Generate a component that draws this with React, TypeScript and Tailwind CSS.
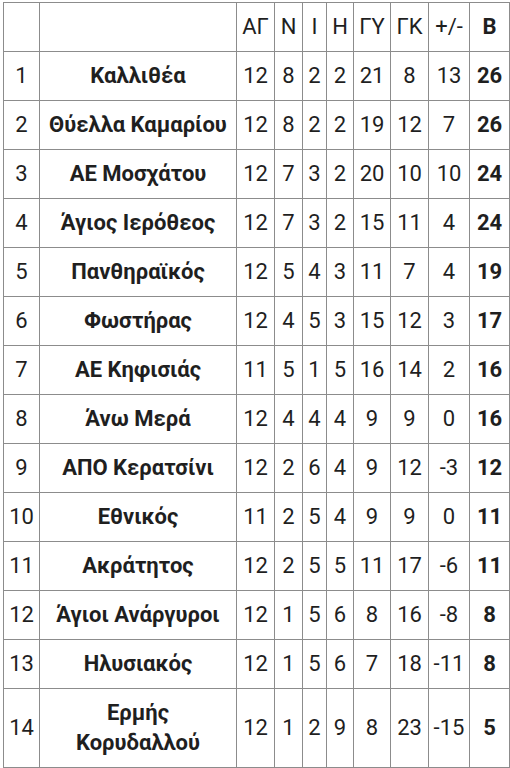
const rows: [number, string, number, number, number, number, number, number, number, number][] = [
  [1, "Καλλιθέα", 12, 8, 2, 2, 21, 8, 13, 26],
  [2, "Θύελλα Καμαρίου", 12, 8, 2, 2, 19, 12, 7, 26],
  [3, "ΑΕ Μοσχάτου", 12, 7, 3, 2, 20, 10, 10, 24],
  [4, "Άγιος Ιερόθεος", 12, 7, 3, 2, 15, 11, 4, 24],
  [5, "Πανθηραϊκός", 12, 5, 4, 3, 11, 7, 4, 19],
  [6, "Φωστήρας", 12, 4, 5, 3, 15, 12, 3, 17],
  [7, "ΑΕ Κηφισιάς", 11, 5, 1, 5, 16, 14, 2, 16],
  [8, "Άνω Μερά", 12, 4, 4, 4, 9, 9, 0, 16],
  [9, "ΑΠΟ Κερατσίνι", 12, 2, 6, 4, 9, 12, -3, 12],
  [10, "Εθνικός", 11, 2, 5, 4, 9, 9, 0, 11],
  [11, "Ακράτητος", 12, 2, 5, 5, 11, 17, -6, 11],
  [12, "Άγιοι Ανάργυροι", 12, 1, 5, 6, 8, 16, -8, 8],
  [13, "Ηλυσιακός", 12, 1, 5, 6, 7, 18, -11, 8],
  [14, "Ερμής|Κορυδαλλού", 12, 1, 2, 9, 8, 23, -15, 5],
];

const headers = ["ΑΓ", "Ν", "Ι", "Η", "ΓΥ", "ΓΚ", "+/-"];

const cell = "border border-[#8c8c8c] py-[9px] px-0 text-center";

export default function App() {
  return (
    <div className="min-h-screen bg-white pt-[2px] pl-[3px] font-['Roboto',_'Noto_Sans',_sans-serif] text-[22px] leading-[30px] text-[#1f1f1f]">
      <table className="table-fixed border-collapse w-[506px]">
        <colgroup>
          <col className="w-[36px]" />
          <col className="w-[197px]" />
          <col className="w-[38px]" />
          <col className="w-[28px]" />
          <col className="w-[24px]" />
          <col className="w-[27px]" />
          <col className="w-[37px]" />
          <col className="w-[38px]" />
          <col className="w-[41px]" />
          <col className="w-[40px]" />
        </colgroup>
        <thead>
          <tr>
            <td className={cell}></td>
            <td className={cell}></td>
            {headers.map((h) => (
              <td key={h} className={cell}>{h}</td>
            ))}
            <td className={`${cell} font-bold`}>Β</td>
          </tr>
        </thead>
        <tbody>
          {rows.map((r) => (
            <tr key={r[0]}>
              <td className={cell}>{r[0]}</td>
              <td className={`${cell} font-bold`}>
                {r[1].split("|").map((part, i) => (
                  <div key={i}>{part}</div>
                ))}
              </td>
              {r.slice(2, 9).map((v, i) => (
                <td key={i} className={cell}>{v}</td>
              ))}
              <td className={`${cell} font-bold`}>{r[9]}</td>
            </tr>
          ))}
        </tbody>
      </table>
    </div>
  );
}
